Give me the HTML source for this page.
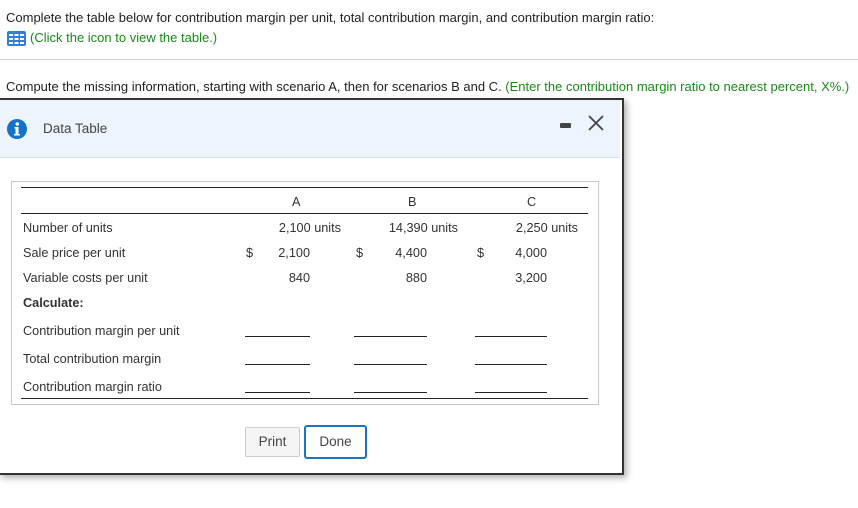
<!DOCTYPE html>
<html><head><style>
body{margin:0;width:858px;height:508px;background:#fff;font-family:"Liberation Sans",Arial,sans-serif;position:relative;overflow:hidden;color:#222}
.a{position:absolute;white-space:nowrap}
.t{font-size:12.7px;color:#333}
.r{text-align:right}
.ul{position:absolute;height:1px;background:#222}
</style></head><body>
<div class="a" style="left:6px;top:10px;font-size:13px;color:#222">Complete the table below for contribution margin per unit, total contribution margin, and contribution margin ratio:</div>
<svg class="a" style="left:7px;top:31px" width="19" height="15" viewBox="0 0 19 15"><rect x="0" y="0" width="19" height="15" rx="2" fill="#2f7fd6"/><g fill="#fff"><rect x="2" y="3" width="4" height="2"/><rect x="7.5" y="3" width="4" height="2"/><rect x="13" y="3" width="4" height="2"/><rect x="2" y="7" width="4" height="2"/><rect x="7.5" y="7" width="4" height="2"/><rect x="13" y="7" width="4" height="2"/><rect x="2" y="11" width="4" height="2"/><rect x="7.5" y="11" width="4" height="2"/><rect x="13" y="11" width="4" height="2"/></g></svg>
<div class="a" style="left:30px;top:30px;font-size:13px;color:#1a8a1a">(Click the icon to view the table.)</div>
<div class="a" style="left:0;top:59px;width:858px;height:1px;background:#ccc"></div>
<div class="a" style="left:6px;top:79px;font-size:13px;color:#222">Compute the missing information, starting with scenario A, then for scenarios B and C. <span style="color:#1a8a1a">(Enter the contribution margin ratio to nearest percent, X%.)</span></div>

<div class="a" style="left:-2px;top:98px;width:622px;height:373px;border:2px solid #333;background:#fff;box-shadow:3px 3px 6px rgba(0,0,0,.3)"></div>
<div class="a" style="left:0;top:100px;width:620px;height:57px;background:#eef4fc;border-bottom:1px solid #cfe3f7"></div>
<svg class="a" style="left:7px;top:119px" width="20" height="20" viewBox="0 0 20 20"><circle cx="10" cy="10" r="10" fill="#1273c9"/><circle cx="10.3" cy="5" r="1.8" fill="#fff"/><path d="M7.5 8h4v7h1.5v1.5h-6V15h1.5v-5.5h-1z" fill="#fff"/></svg>
<div class="a" style="left:43px;top:121px;font-size:13.5px;color:#444">Data Table</div>
<div class="a" style="left:560px;top:123px;width:11px;height:5px;background:#444;border-radius:1px"></div>
<svg class="a" style="left:587px;top:114px" width="18" height="18" viewBox="0 0 18 18"><path d="M2 2L16 16M16 2L2 16" stroke="#444" stroke-width="1.8"/></svg>

<div class="a" style="left:11px;top:181px;width:586px;height:222px;border:1px solid #c8c8c8"></div>
<div class="ul" style="left:21px;top:187px;width:567px"></div>
<div class="ul" style="left:21px;top:213px;width:567px"></div>
<div class="ul" style="left:21px;top:398px;width:567px"></div>
<div class="a t" style="left:292px;top:195px">A</div>
<div class="a t" style="left:408px;top:195px">B</div>
<div class="a t" style="left:527px;top:195px">C</div>
<div class="a t" style="left:23px;top:221px">Number of units</div>
<div class="a t" style="left:23px;top:246px">Sale price per unit</div>
<div class="a t" style="left:23px;top:271px">Variable costs per unit</div>
<div class="a t" style="left:23px;top:296px;font-weight:bold">Calculate:</div>
<div class="a t" style="left:23px;top:324px">Contribution margin per unit</div>
<div class="a t" style="left:23px;top:352px">Total contribution margin</div>
<div class="a t" style="left:23px;top:380px">Contribution margin ratio</div>
<div class="a t r" style="right:517px;top:221px">2,100 units</div>
<div class="a t r" style="right:400px;top:221px">14,390 units</div>
<div class="a t r" style="right:280px;top:221px">2,250 units</div>
<div class="a t" style="left:246px;top:246px">$</div>
<div class="a t" style="left:356px;top:246px">$</div>
<div class="a t" style="left:477px;top:246px">$</div>
<div class="a t r" style="right:548px;top:246px">2,100</div>
<div class="a t r" style="right:431px;top:246px">4,400</div>
<div class="a t r" style="right:311px;top:246px">4,000</div>
<div class="a t r" style="right:548px;top:271px">840</div>
<div class="a t r" style="right:431px;top:271px">880</div>
<div class="a t r" style="right:311px;top:271px">3,200</div>
<div class="ul" style="left:245px;top:336px;width:65px"></div>
<div class="ul" style="left:354px;top:336px;width:73px"></div>
<div class="ul" style="left:475px;top:336px;width:72px"></div>
<div class="ul" style="left:245px;top:364px;width:65px"></div>
<div class="ul" style="left:354px;top:364px;width:73px"></div>
<div class="ul" style="left:475px;top:364px;width:72px"></div>
<div class="ul" style="left:245px;top:392px;width:65px"></div>
<div class="ul" style="left:354px;top:392px;width:73px"></div>
<div class="ul" style="left:475px;top:392px;width:72px"></div>

<div class="a" style="left:245px;top:427px;width:53px;height:28px;border:1px solid #ccc;background:#f5f5f5;border-radius:2px;font-size:13.5px;color:#444;text-align:center;line-height:28px">Print</div>
<div class="a" style="left:304px;top:425px;width:59px;height:30px;border:2px solid #1a75c9;background:#fff;border-radius:3px;font-size:13.5px;color:#444;text-align:center;line-height:30px">Done</div>
</body></html>
